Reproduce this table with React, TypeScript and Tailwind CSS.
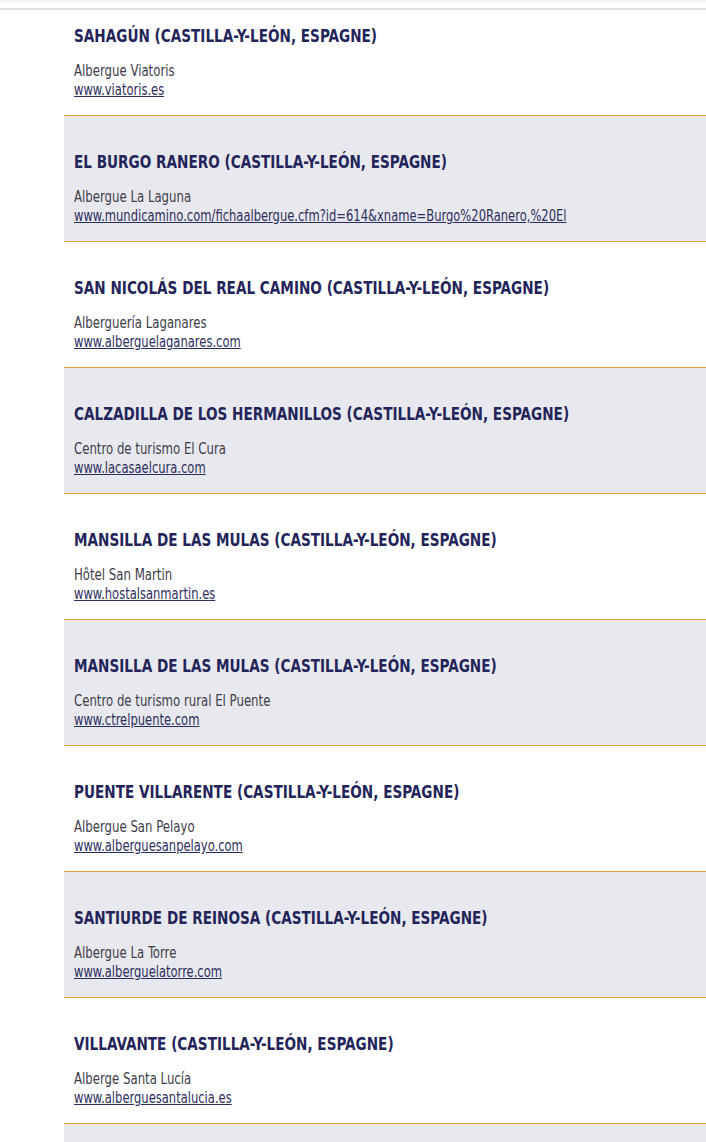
const places = [
  { town: 'SAHAGÚN (CASTILLA-Y-LEÓN, ESPAGNE)', name: 'Albergue Viatoris', url: 'www.viatoris.es' },
  { town: 'EL BURGO RANERO (CASTILLA-Y-LEÓN, ESPAGNE)', name: 'Albergue La Laguna', url: 'www.mundicamino.com/fichaalbergue.cfm?id=614&xname=Burgo%20Ranero,%20El' },
  { town: 'SAN NICOLÁS DEL REAL CAMINO (CASTILLA-Y-LEÓN, ESPAGNE)', name: 'Alberguería Laganares', url: 'www.alberguelaganares.com' },
  { town: 'CALZADILLA DE LOS HERMANILLOS (CASTILLA-Y-LEÓN, ESPAGNE)', name: 'Centro de turismo El Cura', url: 'www.lacasaelcura.com' },
  { town: 'MANSILLA DE LAS MULAS (CASTILLA-Y-LEÓN, ESPAGNE)', name: 'Hôtel San Martin', url: 'www.hostalsanmartin.es' },
  { town: 'MANSILLA DE LAS MULAS (CASTILLA-Y-LEÓN, ESPAGNE)', name: 'Centro de turismo rural El Puente', url: 'www.ctrelpuente.com' },
  { town: 'PUENTE VILLARENTE (CASTILLA-Y-LEÓN, ESPAGNE)', name: 'Albergue San Pelayo', url: 'www.alberguesanpelayo.com' },
  { town: 'SANTIURDE DE REINOSA (CASTILLA-Y-LEÓN, ESPAGNE)', name: 'Albergue La Torre', url: 'www.alberguelatorre.com' },
  { town: 'VILLAVANTE (CASTILLA-Y-LEÓN, ESPAGNE)', name: 'Alberge Santa Lucía', url: 'www.alberguesantalucia.es' },
];

export default function App() {
  return (
    <div className="min-h-screen bg-white font-['DejaVu_Sans_Condensed','DejaVu_Sans',sans-serif]">
      {/* top strip */}
      <div className="h-[3px] bg-[#f3f3fa]" />
      <div className="h-[5px] bg-[#fdfdfd]" />
      <div className="h-[2px] bg-[#e2e2dc]" />

      <ul className="ml-[64px]">
        {places.map((p, i) => (
          <li key={i} className={i % 2 === 1 ? 'bg-[#e8e9ee]' : 'bg-white'}>
            <div className={`px-[10px] ${i === 0 ? 'h-[105px] pt-[15px]' : 'h-[125px] pt-[35px]'}`}>
              <h2 className="origin-left scale-x-[0.84] whitespace-nowrap text-[18px] leading-[22px] font-bold text-[#23245a]">
                {p.town}
              </h2>
              <p className="mt-[15px] origin-left scale-x-[0.87] whitespace-nowrap text-[15px] leading-[19px] text-[#3d3d4a]">
                {p.name}
              </p>
              <a
                href="#"
                className="block origin-left scale-x-[0.855] whitespace-nowrap text-[15px] leading-[19px] text-[#2b2d5c] underline"
              >
                {p.url}
              </a>
            </div>
            <div className="h-px bg-[#e8a33c]" />
          </li>
        ))}
        <li className="h-[40px] bg-[#e8e9ee]" />
      </ul>
    </div>
  );
}
